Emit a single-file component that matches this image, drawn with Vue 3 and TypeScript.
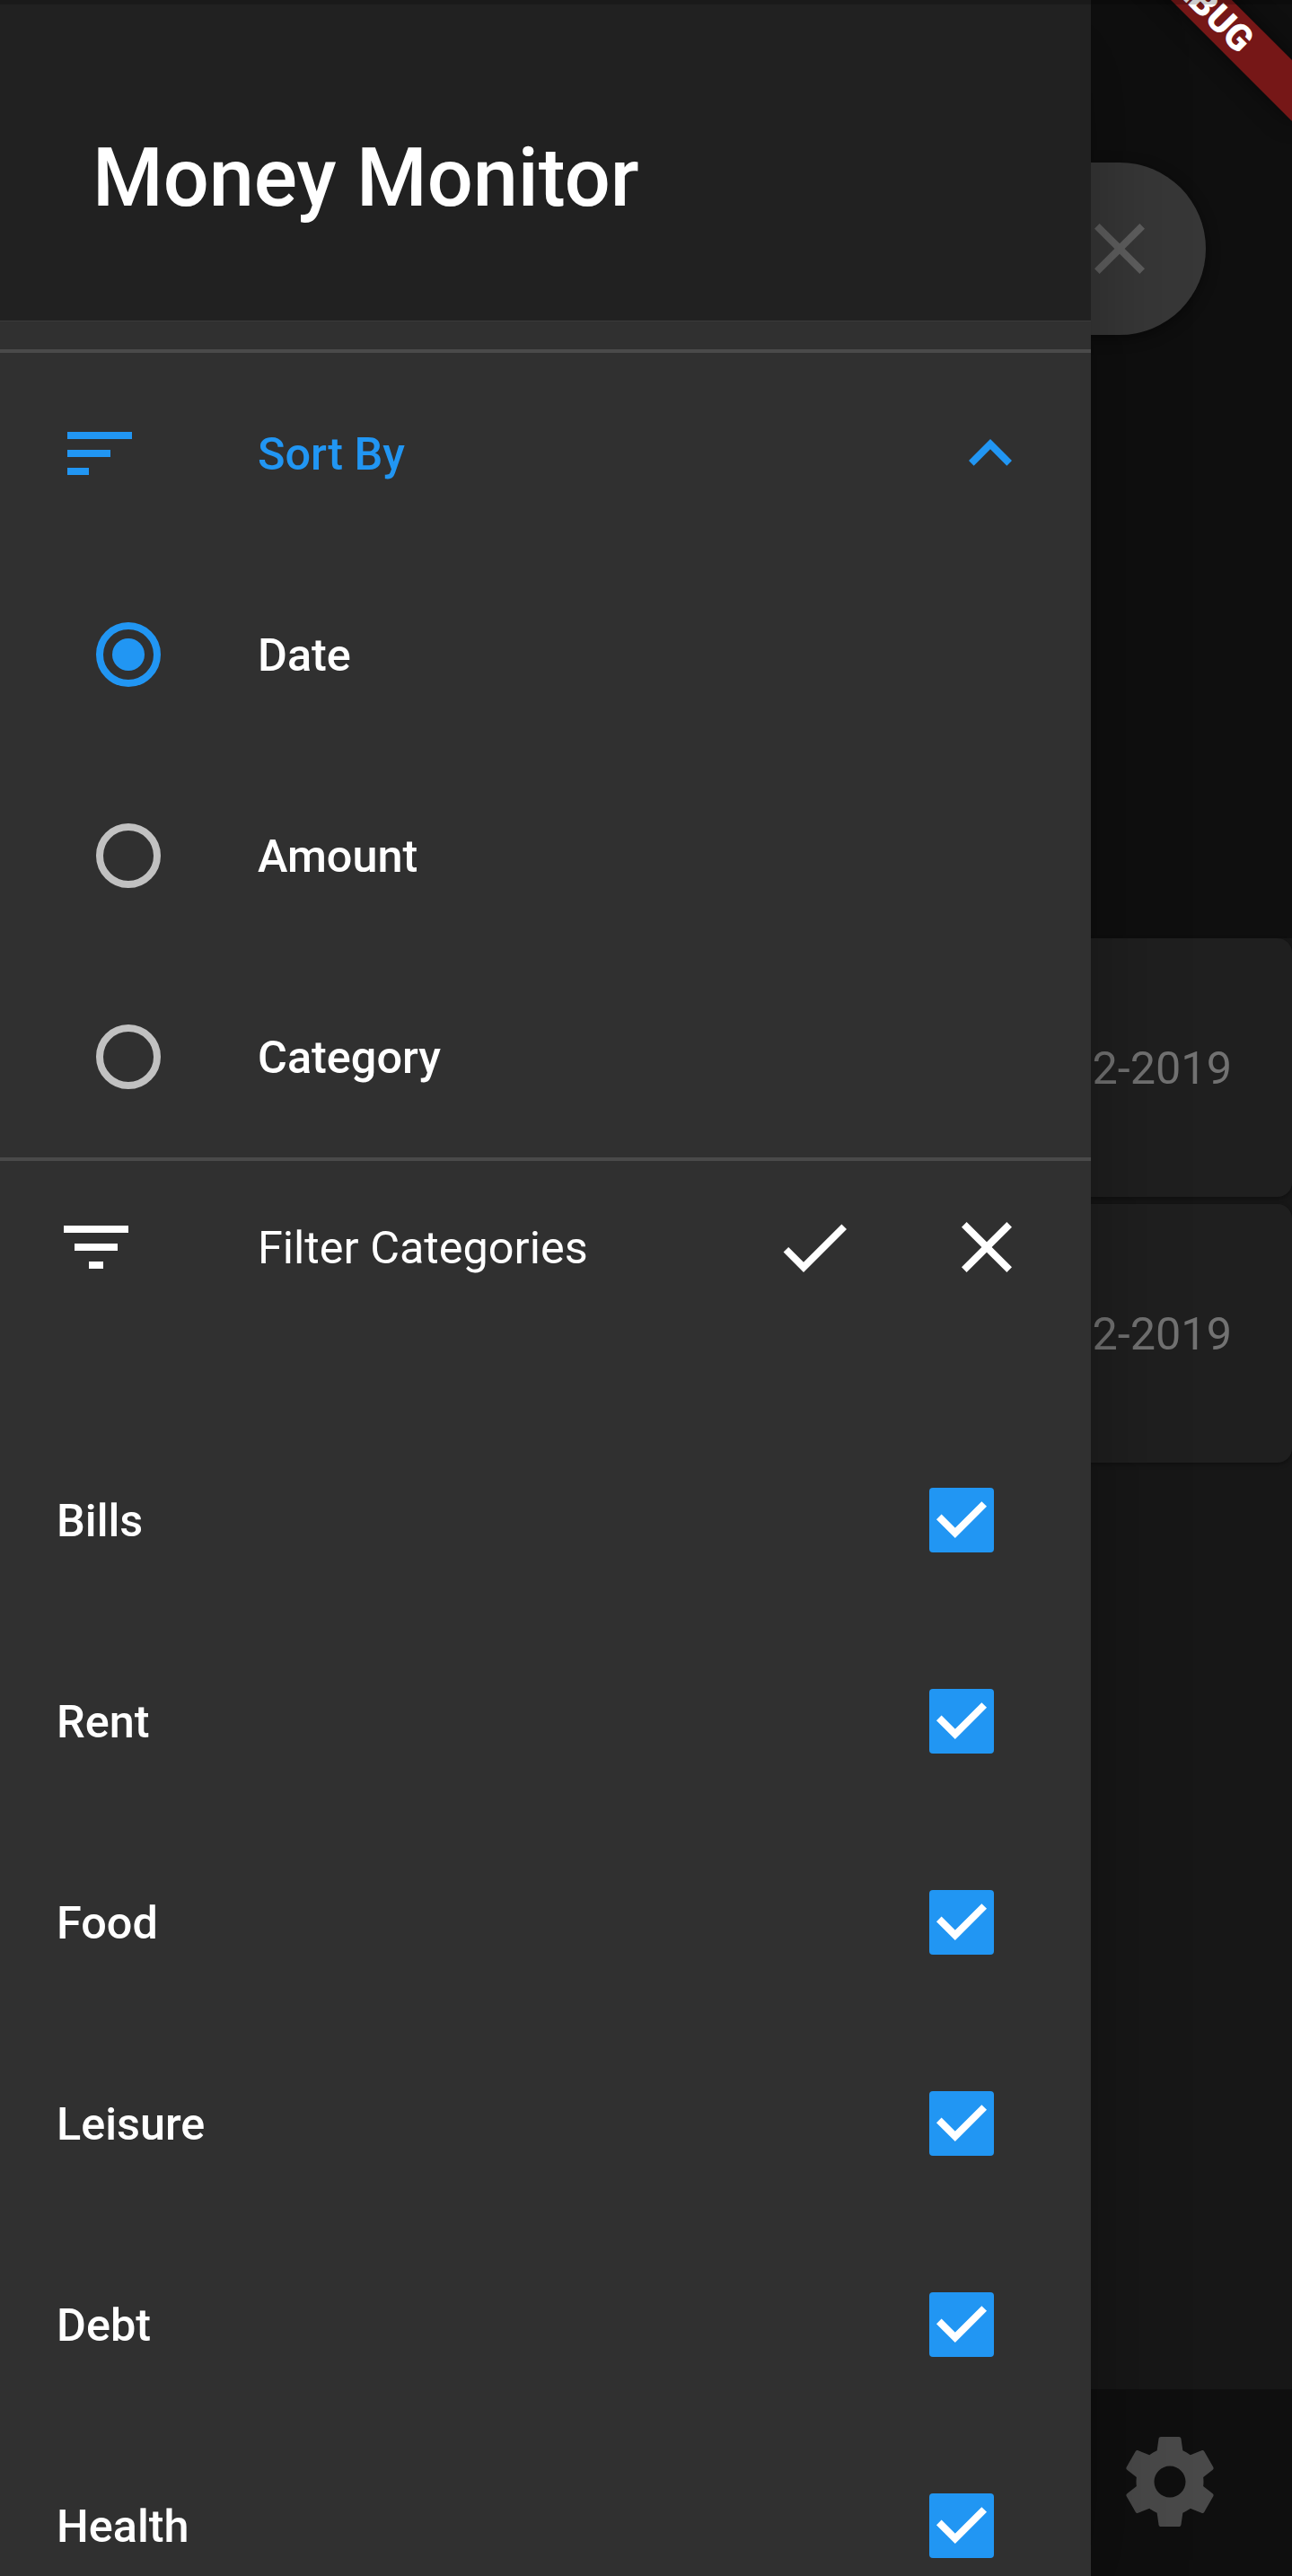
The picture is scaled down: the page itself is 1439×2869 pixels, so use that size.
<script setup lang="ts">
import { ref } from 'vue'

interface Category {
  name: string
  checked: boolean
}

const sortOptions: string[] = ['Date', 'Amount', 'Category']
const selectedSort = ref<string>('Date')

const categories = ref<Category[]>(
  ['Bills', 'Rent', 'Food', 'Leisure', 'Debt', 'Health'].map((name) => ({ name, checked: true })),
)

const expenseDates: string[] = ['2-2019', '2-2019']
</script>

<template>
  <div class="screen">
    <div class="home">
      <div class="top">
        <div class="search">
          <svg class="icon" viewBox="0 0 24 24">
            <path d="M19 6.41L17.59 5 12 10.59 6.41 5 5 6.41 10.59 12 5 17.59 6.41 19 12 13.41 17.59 19 19 17.59 13.41 12z" />
          </svg>
        </div>
      </div>
      <div class="list">
        <div v-for="(date, i) in expenseDates" :key="i" class="card">{{ date }}</div>
      </div>
      <div class="bottom-bar">
        <svg class="gear" viewBox="0 0 24 24">
          <path d="M19.43 12.98c.04-.32.07-.64.07-.98s-.03-.66-.07-.98l2.11-1.65c.19-.15.24-.42.12-.64l-2-3.46c-.12-.22-.39-.3-.61-.22l-2.49 1c-.52-.4-1.08-.73-1.69-.98l-.38-2.65C14.46 2.18 14.25 2 14 2h-4c-.25 0-.46.18-.49.42l-.38 2.65c-.61.25-1.17.59-1.69.98l-2.49-1c-.23-.09-.49 0-.61.22l-2 3.46c-.13.22-.07.49.12.64l2.11 1.65c-.04.32-.07.65-.07.98s.03.66.07.98l-2.11 1.65c-.19.15-.24.42-.12.64l2 3.46c.12.22.39.3.61.22l2.49-1c.52.4 1.08.73 1.69.98l.38 2.65c.03.24.24.42.49.42h4c.25 0 .46-.18.49-.42l.38-2.65c.61-.25 1.17-.59 1.69-.98l2.49 1c.23.09.49 0 .61-.22l2-3.46c.12-.22.07-.49-.12-.64l-2.11-1.65zM12 15.5c-1.93 0-3.5-1.57-3.5-3.5s1.57-3.5 3.5-3.5 3.5 1.57 3.5 3.5-1.57 3.5-3.5 3.5z" />
        </svg>
      </div>
    </div>

    <aside class="drawer">
      <header class="header"><h1>Money Monitor</h1></header>

      <section class="section sort">
        <div class="row active">
          <svg class="icon sort-icon" viewBox="0 0 24 24">
            <path d="M3 18h6v-2H3v2zM3 6v2h18V6H3zm0 7h12v-2H3v2z" />
          </svg>
          <span class="label">Sort By</span>
          <svg class="icon" viewBox="0 0 24 24">
            <path d="M12 8l-6 6 1.41 1.41L12 10.83l4.59 4.58L18 14z" />
          </svg>
        </div>
        <div
          v-for="option in sortOptions"
          :key="option"
          class="row option"
          @click="selectedSort = option"
        >
          <span class="radio" :class="{ on: option === selectedSort }"></span>
          <span class="label">{{ option }}</span>
        </div>
      </section>

      <section class="section">
        <div class="row filter">
          <svg class="icon" viewBox="0 0 24 24">
            <path d="M10 18h4v-2h-4v2zM3 6v2h18V6H3zm3 7h12v-2H6v2z" />
          </svg>
          <span class="label">Filter Categories</span>
          <svg class="icon" viewBox="0 0 24 24">
            <path d="M9 16.2L4.8 12l-1.4 1.4L9 19 21 7l-1.4-1.4L9 16.2z" />
          </svg>
          <svg class="icon" viewBox="0 0 24 24">
            <path d="M19 6.41L17.59 5 12 10.59 6.41 5 5 6.41 10.59 12 5 17.59 6.41 19 12 13.41 17.59 19 19 17.59 13.41 12z" />
          </svg>
        </div>
        <div class="categories">
          <div
            v-for="category in categories"
            :key="category.name"
            class="row category"
            @click="category.checked = !category.checked"
          >
            <span class="label">{{ category.name }}</span>
            <span class="box" :class="{ on: category.checked }">
              <svg v-if="category.checked" viewBox="0 0 72 72">
                <path d="M10.8 32.4L28.8 50.4L61.2 18" />
              </svg>
            </span>
          </div>
        </div>
      </section>
    </aside>

    <div class="banner">DEBUG</div>
    <div class="status-strip"></div>
  </div>
</template>

<style>
body {
  margin: 0;
  background: #161616;
}
</style>

<style scoped>
.screen {
  position: relative;
  width: 1439px;
  height: 2869px;
  overflow: hidden;
  font-family: Roboto, sans-serif;
  font-size: 50.4px;
  line-height: 60px;
  color: #fff;
}

.icon {
  flex: none;
  width: 96px;
  height: 96px;
  fill: currentColor;
}

.home {
  display: flex;
  flex-direction: column;
  height: 100%;
  background: #171717;
}

.top {
  flex: none;
  height: 1045px;
  box-sizing: border-box;
  padding: 181px 96px 0;
  background: #0f0f0f;
}

.search {
  display: flex;
  align-items: center;
  justify-content: flex-end;
  height: 192px;
  box-sizing: border-box;
  padding-right: 48px;
  border-radius: 96px;
  background: #373737;
  color: #5f5f5f;
  box-shadow: 0 4px 16px rgba(0, 0, 0, 0.4);
}

.list {
  flex: 1;
  display: flex;
  flex-direction: column;
  gap: 8px;
}

.card {
  display: flex;
  align-items: center;
  justify-content: flex-end;
  height: 288px;
  box-sizing: border-box;
  padding: 2px 67px 0 0;
  border-radius: 16px;
  background: #1f1f1f;
  color: #727272;
  box-shadow: 0 2px 5px rgba(0, 0, 0, 0.35);
}

.bottom-bar {
  flex: none;
  display: flex;
  justify-content: flex-end;
  align-items: center;
  height: 208px;
  box-sizing: border-box;
  padding: 0 76px 2px 0;
  background: #0f0f0f;
}

.gear {
  width: 120px;
  height: 120px;
  fill: #494949;
}

.drawer {
  position: absolute;
  top: 0;
  left: 0;
  width: 1215px;
  height: 2869px;
  overflow: hidden;
  background: #303030;
  clip-path: inset(0 -200px 0 0);
  box-shadow: 0 32px 100px rgba(0, 0, 0, 0.3);
}

.header {
  height: 357px;
  box-sizing: border-box;
  padding: 145px 0 0 103px;
  background: #212121;
  box-shadow: 0 1px 0 #3b3b3b;
}

h1 {
  margin: 0;
  font-size: 90px;
  line-height: 108px;
  font-weight: 500;
}

.section {
  border-top: 4px solid #4a4a4a;
}

.sort {
  margin-top: 32px;
}

.row {
  display: flex;
  align-items: center;
  height: 224px;
  box-sizing: border-box;
  padding: 0 64px 0 63px;
  font-weight: 500;
}

.label {
  flex: 1;
  padding-top: 2px;
}

.row .icon + .label {
  margin-left: 128px;
}

.active {
  color: #2196f3;
}

.option {
  padding-left: 107px;
}

.option .label {
  margin-left: 108px;
}

.radio {
  display: flex;
  align-items: center;
  justify-content: center;
  width: 72px;
  height: 72px;
  box-sizing: border-box;
  border: 8px solid #c1c1c1;
  border-radius: 50%;
}

.radio.on {
  border-color: #2196f3;
}

.radio.on::after {
  content: '';
  width: 36px;
  height: 36px;
  border-radius: 50%;
  background: #2196f3;
}

.filter {
  height: 192px;
  padding: 0 68px 0 59px;
  font-weight: 400;
}

.row.filter .icon + .label {
  margin-left: 132px;
}

.filter .icon + .icon {
  margin-left: 96px;
}

.categories {
  padding-top: 96px;
}

.category {
  padding-right: 108px;
}

.box {
  width: 72px;
  height: 72px;
  box-sizing: border-box;
  border: 8px solid #c1c1c1;
  border-radius: 4px;
}

.box.on {
  border: 0;
  background: #2196f3;
}

.box svg {
  display: block;
  fill: none;
  stroke: #fff;
  stroke-width: 8;
}

.banner {
  position: absolute;
  left: 1183px;
  top: -19px;
  width: 320px;
  height: 48px;
  transform: rotate(45deg);
  background: #761717;
  box-shadow: 0 0 24px rgba(0, 0, 0, 0.5);
  text-align: center;
  font-size: 40.8px;
  line-height: 48px;
  font-weight: 900;
}

.status-strip {
  position: absolute;
  top: 0;
  left: 0;
  width: 100%;
  height: 5px;
  background: rgba(0, 0, 0, 0.2);
}
</style>
